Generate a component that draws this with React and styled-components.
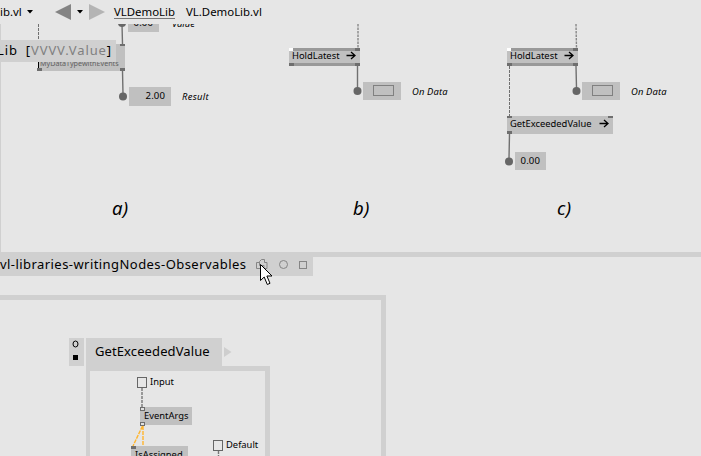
import React from "react";
import styled, { createGlobalStyle } from "styled-components";

const GlobalStyle = createGlobalStyle`
  * { box-sizing: border-box; }
  body { margin: 0; background: #e6e6e6; overflow: hidden; }
`;

const Window = styled.div`
  position: relative;
  display: flex;
  flex-direction: column;
  width: 701px;
  height: 456px;
  overflow: hidden;
  background: #e6e6e6;
  color: #000;
  font-family: "Noto Sans", "Open Sans", sans-serif;
  white-space: nowrap;
`;

const Toolbar = styled.header`
  display: flex;
  align-items: center;
  flex: 0 0 24px;
  font-size: 11.4px;
  line-height: 14px;
`;

const FileMenu = styled.div`
  display: flex;
  align-items: center;
  gap: 5px;
  width: 55px;
`;

const FileName = styled.span`
  width: 22px;
`;

const History = styled.div`
  display: flex;
  align-items: center;
  width: 59px;
  gap: 6px;
`;

const Crumbs = styled.nav`
  display: flex;
  align-self: flex-start;
  gap: 11px;
  padding-top: 5px;
`;

const Crumb = styled.a`
  height: 14px;
  border-bottom: 1px solid ${(p) => (p.$active ? "#777" : "transparent")};
`;

const UpperPatch = styled.section`
  position: relative;
  flex: 0 0 233px;
  overflow: hidden;
  border-left: 1px solid #d0d0d0;
  border-bottom: 5px solid #d0d0d0;
`;

const Wires = styled.svg`
  position: absolute;
  left: 0;
  top: 0;
  width: 100%;
  height: 100%;
  fill: none;
  stroke: #707070;
  stroke-width: 1.4;
`;

/* Anything dropped on a patch: its position is the user's. */
const Placed = styled.div`
  position: absolute;
  left: ${(p) => p.$x}px;
  top: ${(p) => p.$y}px;
  display: flex;
  align-items: center;
  gap: ${(p) => p.$gap || 0}px;
  font-size: 9.4px;
  line-height: 12px;
`;

const Node = styled(Placed)`
  width: ${(p) => p.$w}px;
  height: ${(p) => p.$h || 18}px;
  padding: 0 4px 2px 3px;
  justify-content: space-between;
  background: #c0c0c0;
  border: 0 solid #999;
  border-width: ${(p) => (p.$bars ? "3px 0" : 0)};
`;

const PlainNode = styled(Node)`
  padding: 0 0 0 4px;
`;

const TypeNode = styled(Node)`
  align-items: flex-end;
  justify-content: flex-start;
  padding: 0 0 2px 1px;
  font-size: 7.2px;
  color: #606060;
`;

const Pin = styled.i`
  position: absolute;
  ${(p) => (p.$right ? "right" : "left")}: ${(p) => p.$inset || 0}px;
  ${(p) => (p.$out ? "bottom" : "top")}: ${(p) => p.$shift || 0}px;
  width: ${(p) => p.$w || 5}px;
  height: ${(p) => p.$h || 3}px;
  background: ${(p) => p.$fill || "#6e6e6e"};
  border: ${(p) => (p.$hollow ? "1px solid #6e6e6e" : 0)};
`;

const TextCaret = styled.i`
  width: 1px;
  height: 8px;
  margin: 0 1px 1px -1px;
  background: #000;
`;

const ValueBox = styled.span`
  display: flex;
  align-items: center;
  justify-content: flex-end;
  width: ${(p) => p.$w || 31}px;
  height: ${(p) => p.$h || 18}px;
  padding: 0 6px ${(p) => (p.$h ? 1 : 0)}px 0;
  background: #c0c0c0;
  font-size: 9.6px;
  letter-spacing: 0.1px;
`;

const BangBox = styled.span`
  display: flex;
  align-items: center;
  width: 38px;
  height: 18px;
  padding-left: 10px;
  background: #c0c0c0;

  &::before {
    content: "";
    width: 19px;
    height: 9px;
    margin-top: -1px;
    border: 1px solid #808080;
  }
`;

const Comment = styled.em`
  padding-top: ${(p) => p.$drop || 0}px;
  letter-spacing: ${(p) => p.$track || 0}px;
`;

const Caption = styled(Placed)`
  font-size: 18.5px;
  font-style: italic;
  line-height: 24px;
  letter-spacing: 0.3px;
`;

const TypeHint = styled.div`
  position: absolute;
  left: 0;
  top: 40px;
  width: 116px;
  height: 22px;
  padding-right: 4px;
  display: flex;
  justify-content: flex-end;
  gap: 8px;
  background: #d0d0d0;
  font-size: 13px;
  line-height: 20px;
  letter-spacing: 0.9px;
`;

const Muted = styled.span`
  color: #808080;
`;

const DocumentTab = styled.div`
  display: flex;
  align-items: flex-start;
  flex: 0 0 19px;
  width: 313px;
  background: #d0d0d0;
  font-size: 13px;
  line-height: 15px;
  letter-spacing: 0.44px;
`;

const TabTitle = styled.span`
  width: 256px;
`;

const TabIcons = styled.svg`
  width: 54px;
  height: 19px;
  fill: none;
  stroke: #858585;
`;

const LowerPatch = styled.section`
  flex: 1;
  width: 386px;
  margin-top: 19px;
  padding: 38px 0 0 69px;
  border: 5px solid #d0d0d0;
  border-left: 0;
  border-bottom: 0;
`;

const OperationHead = styled.div`
  display: flex;
  height: 28px;
`;

const Switches = styled.div`
  display: flex;
  width: 15px;
  margin-right: 2px;
  background: #d0d0d0;
`;

const OperationTitle = styled.h2`
  width: 136px;
  margin: 0;
  padding-left: 9px;
  background: #d0d0d0;
  font-size: 13px;
  font-weight: 400;
  line-height: 26px;
  letter-spacing: 0.1px;
`;

const OperationBody = styled.div`
  position: relative;
  width: 184px;
  height: 110px;
  margin-left: 17px;
  border: 5px solid #d0d0d0;
  border-left-width: 4px;
  border-bottom: 0;
`;

const InputPort = styled(Placed)`
  align-items: flex-start;
  gap: 3px;
  line-height: 10px;
`;

const InputBox = styled.i`
  width: 10px;
  height: 11px;
  border: 1px solid #666;
  background: #e6e6e6;
`;

const Cursor = styled.svg`
  position: absolute;
  left: 260px;
  top: 264px;
  width: 13px;
  height: 23px;
`;

const Caret = () => (
  <svg width="6" height="4"><path d="M0 0H6L3 3.5Z" /></svg>
);

const Arrow = () => (
  <svg width="10" height="10" fill="none" stroke="#000" strokeWidth="1.3">
    <path d="M0.500 4.500H9M5 1L9 4.500L5 8" />
  </svg>
);

function HoldLatest({ x }) {
  return (
    <Node $x={x} $y={24} $w={71} $bars>
      <Pin $shift={-3} $w={4} $fill="#fff" />
      <Pin $right $shift={-3} />
      <Pin $out $shift={-3} />
      <Pin $right $out $shift={-3} />
      <span>HoldLatest</span>
      <Arrow />
    </Node>
  );
}

function OnData({ x }) {
  return (
    <Placed $x={x} $y={58} $gap={11}>
      <BangBox />
      <Comment $track={0.15} $drop={2}>On Data</Comment>
    </Placed>
  );
}

export default function App() {
  return (
    <Window>
      <GlobalStyle />
      <Toolbar>
        <FileMenu>
          <FileName>ib.vl</FileName>
          <Caret />
        </FileMenu>
        <History>
          <svg width="16" height="16"><path d="M0 8L16 0V16Z" fill="#848484" /></svg>
          <Caret />
          <svg width="16" height="16"><path d="M16 8L0 0V16Z" fill="#b4b4b4" /></svg>
        </History>
        <Crumbs>
          <Crumb $active>VLDemoLib</Crumb>
          <Crumb>VL.DemoLib.vl</Crumb>
        </Crumbs>
      </Toolbar>

      <UpperPatch>
        <Placed $x={127} $y={-10} $gap={13}>
          <ValueBox>0.00</ValueBox>
          <Comment $drop={2}>Value</Comment>
        </Placed>
        <TypeNode $x={37} $y={20} $w={87} $h={27}>
          <Pin $inset={-1} $out />
          <Pin $right $out />
          <Pin $right $h={2} />
          <TextCaret />
          <span>MyDataTypewithEvents</span>
        </TypeNode>
        <Placed $x={128} $y={63} $gap={11}>
          <ValueBox $w={42} $h={19}>2.00</ValueBox>
          <Comment $track={0.3}>Result</Comment>
        </Placed>

        <HoldLatest x={288} />
        <OnData x={362} />

        <HoldLatest x={506} />
        <OnData x={581} />
        <Node $x={506} $y={92} $w={106}>
          <Pin $h={2} />
          <Pin $right $h={2} />
          <Pin $out />
          <span>GetExceededValue</span>
          <Arrow />
        </Node>
        <Placed $x={514} $y={128}>
          <ValueBox>0.00</ValueBox>
        </Placed>

        <Caption $x={111} $y={172}>a)</Caption>
        <Caption $x={352} $y={172}>b)</Caption>
        <Caption $x={556} $y={172}>c)</Caption>

        <Wires>
          <path d="M37.5 0V16M508.5 42V92" strokeDasharray="3 1" strokeWidth="1" />
          <path d="M357 0V24M575 0L575.5 24" strokeDasharray="2.5 1" stroke="#888" />
          <path d="M121 0L121.500 20M121.500 47L122 70M356.500 42V64M575 42L575.500 64M508.500 110L508 134" />
          <g fill="#666" stroke="none">
            <circle cx="121" cy="-1" r="4" />
            <circle cx="122" cy="72.5" r="4" />
            <circle cx="356.5" cy="67" r="4" />
            <circle cx="575.5" cy="67" r="4" />
            <circle cx="508" cy="137.5" r="4" />
          </g>
        </Wires>
      </UpperPatch>

      <DocumentTab>
        <TabTitle>vl-libraries-writingNodes-Observables</TabTitle>
        <TabIcons>
          <path d="M3.5 5.5H0.5V11.5H6.5V9M3.5 8.5V4.500L5.500 2.500H8.500V5.500H11V11.500H8V8.500H3.500" />
          <circle cx="27.5" cy="7.5" r="4" />
          <rect x="43.5" y="4.5" width="7" height="7" />
        </TabIcons>
      </DocumentTab>

      <LowerPatch>
        <OperationHead>
          <Switches>
            <svg width="15" height="28">
              <ellipse cx="6.500" cy="6" rx="2.500" ry="3" fill="none" stroke="#000" />
              <path d="M4 17H9V22H4Z" />
            </svg>
          </Switches>
          <OperationTitle>GetExceededValue</OperationTitle>
          <svg width="12" height="28"><path d="M2 9L9.500 14L2 19Z" fill="#cecece" /></svg>
        </OperationHead>
        <OperationBody>
          <Wires>
            <path d="M52 17V36M128.500 80V90" strokeDasharray="3 1" stroke="#777" />
            <path d="M52.500 55L43 75M53 55V75" strokeDasharray="4 1" stroke="#ffb52e" />
          </Wires>
          <InputPort $x={47} $y={6}>
            <InputBox />
            <span>Input</span>
          </InputPort>
          <PlainNode $x={50} $y={36} $w={52}>
            <Pin $h={4} $fill="#e0e0e0" $hollow />
            <Pin $out $shift={-1} $h={4} $fill="#e0e0e0" $hollow />
            <span>EventArgs</span>
          </PlainNode>
          <PlainNode $x={41} $y={75} $w={57}>
            <Pin />
            <span>IsAssigned</span>
          </PlainNode>
          <InputPort $x={123} $y={69}>
            <InputBox />
            <span>Default</span>
          </InputPort>
        </OperationBody>
      </LowerPatch>

      <TypeHint>
        <span>Lib</span>
        <span>[<Muted>VVVV.Value</Muted>]</span>
      </TypeHint>

      <Cursor viewBox="0 0 13 23">
        <path d="M0.5 0.500V16.500L4.200 13L7.300 20.500L10 19.300L6.900 12H12Z" fill="#fff" stroke="#000" />
      </Cursor>
    </Window>
  );
}
